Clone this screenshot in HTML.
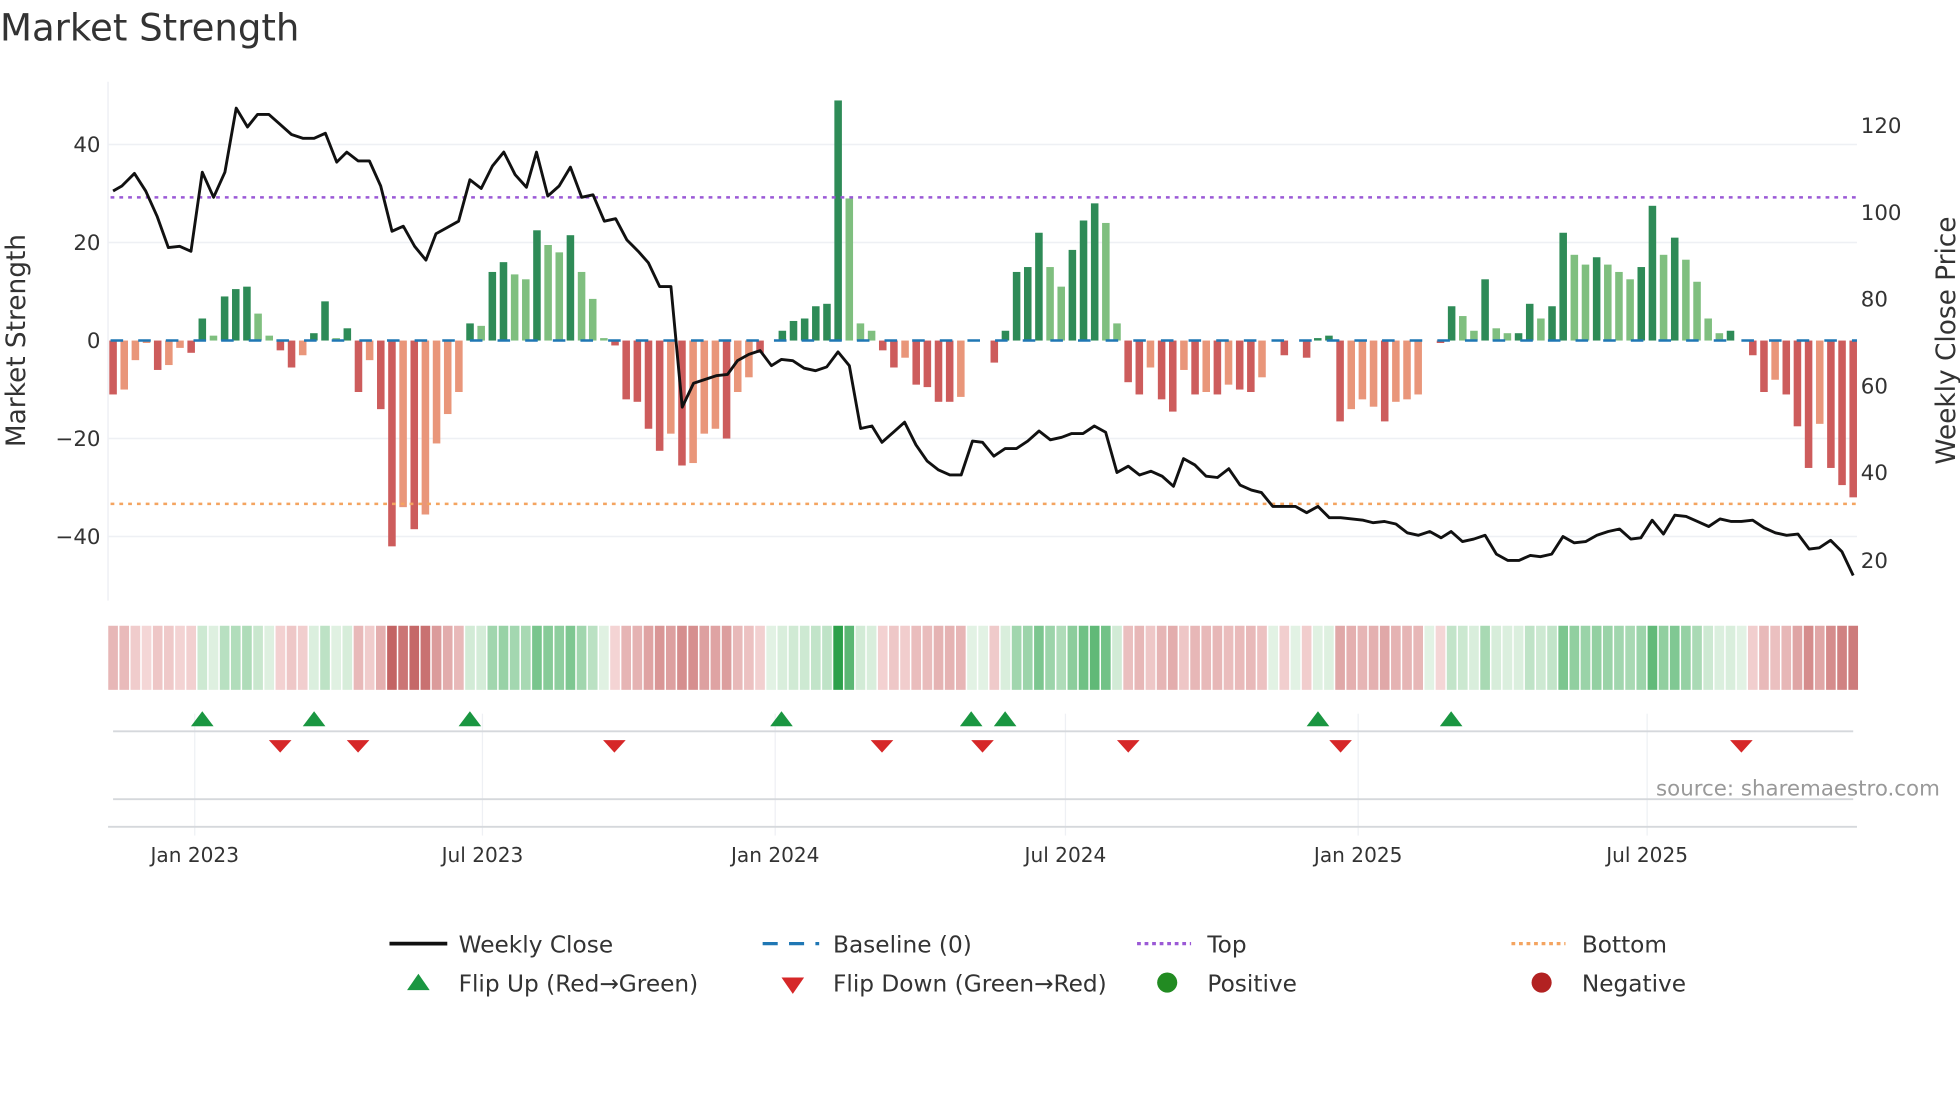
<!DOCTYPE html>
<html><head><meta charset="utf-8"><style>
html,body{margin:0;padding:0;background:#fff;width:1960px;height:1102px;overflow:hidden}
svg{display:block}
text{font-family:"DejaVu Sans","Liberation Sans",sans-serif;fill:#333}
</style></head><body>
<svg id="s" width="1960" height="1102" viewBox="0 0 1560 877" xmlns="http://www.w3.org/2000/svg">
<rect width="1560" height="877" fill="#fff"/>
<text x="0" y="32" font-size="29.5" fill="#333">Market Strength</text>
<g stroke="#eef0f4" stroke-width="1.2">
<line x1="86" x2="1478" y1="115" y2="115"/><line x1="86" x2="1478" y1="193" y2="193"/>
<line x1="86" x2="1478" y1="349" y2="349"/><line x1="86" x2="1478" y1="427" y2="427"/>
</g>
<line x1="86" x2="86" y1="65" y2="478" stroke="#eef0f4" stroke-width="1.2"/>
<g font-size="17" text-anchor="end">
<text x="80" y="121">40</text><text x="80" y="199">20</text><text x="80" y="277">0</text>
<text x="80" y="355">−20</text><text x="80" y="433">−40</text>
</g>
<g font-size="17">
<text x="1481" y="106">120</text><text x="1481" y="175">100</text><text x="1481" y="244">80</text>
<text x="1481" y="313">60</text><text x="1481" y="382">40</text><text x="1481" y="452">20</text>
</g>
<text transform="translate(20,271) rotate(-90)" font-size="21" text-anchor="middle">Market Strength</text>
<text transform="translate(1556,271) rotate(-90)" font-size="21" text-anchor="middle">Weekly Close Price</text>
<g id="bars"></g>
<line x1="88" x2="1478" y1="271" y2="271" stroke="#1f77b4" stroke-width="2" stroke-dasharray="10,12"/>
<line x1="88" x2="1478" y1="157" y2="157" stroke="#9b59d6" stroke-width="2" stroke-dasharray="3,4"/>
<line x1="88" x2="1478" y1="401" y2="401" stroke="#f4a460" stroke-width="2" stroke-dasharray="3,4"/>
<polyline id="price" fill="none" stroke="#111" stroke-width="2.3" stroke-linejoin="round"/>
<g id="heat"></g>
<g stroke="#eef0f4" stroke-width="1">
<line x1="155" x2="155" y1="568" y2="665"/><line x1="384" x2="384" y1="568" y2="665"/>
<line x1="617" x2="617" y1="568" y2="665"/><line x1="848" x2="848" y1="568" y2="665"/>
<line x1="1081" x2="1081" y1="568" y2="665"/><line x1="1311" x2="1311" y1="568" y2="665"/>
</g>
<line x1="90" x2="1475" y1="582" y2="582" stroke="#d5d8dc" stroke-width="1.5"/>
<line x1="90" x2="1475" y1="636" y2="636" stroke="#d5d8dc" stroke-width="1.5"/>
<line x1="86" x2="1478" y1="658" y2="658" stroke="#d5d8dc" stroke-width="1.5"/>
<g id="flips"></g>
<text x="1544" y="633" font-size="17" text-anchor="end" style="fill:#999">source: sharemaestro.com</text>
<g font-size="16" text-anchor="middle">
<text x="155" y="686">Jan 2023</text><text x="384" y="686">Jul 2023</text><text x="617" y="686">Jan 2024</text>
<text x="848" y="686">Jul 2024</text><text x="1081" y="686">Jan 2025</text><text x="1311" y="686">Jul 2025</text>
</g>
<g font-size="18.5">
<line x1="310" x2="356" y1="751" y2="751" stroke="#111" stroke-width="3"/>
<text x="365" y="758">Weekly Close</text>
<line x1="607" x2="652" y1="751" y2="751" stroke="#1f77b4" stroke-width="2.5" stroke-dasharray="12,9"/>
<text x="663" y="758">Baseline (0)</text>
<line x1="905" x2="948" y1="751" y2="751" stroke="#9b59d6" stroke-width="2.5" stroke-dasharray="3,3"/>
<text x="961" y="758">Top</text>
<line x1="1203" x2="1246" y1="751" y2="751" stroke="#f4a460" stroke-width="2.5" stroke-dasharray="3,3"/>
<text x="1259" y="758">Bottom</text>
<polygon points="324,788 333,775 342,788" fill="#1a9641"/>
<text x="365" y="789">Flip Up (Red→Green)</text>
<polygon points="622,778 640,778 631,791" fill="#d62728"/>
<text x="663" y="789">Flip Down (Green→Red)</text>
<circle cx="929" cy="782" r="8" fill="#228b22"/>
<text x="961" y="789">Positive</text>
<circle cx="1227" cy="782" r="8" fill="#b22222"/>
<text x="1259" y="789">Negative</text>
</g>
</svg>
<script>
var NS="http://www.w3.org/2000/svg";
function el(p,t,a){var e=document.createElementNS(NS,t);for(var k in a)e.setAttribute(k,a[k]);p.appendChild(e);return e;}
var B=[[-11,1],[-10,0],[-4,0],[-0.5,0],[-6,1],[-5,0],[-1.5,0],[-2.5,1],[4.5,1],[1,0],[9,1],[10.5,1],[11,1],[5.5,0],[1,0],[-2,1],[-5.5,1],[-3,0],[1.5,1],[8,1],[0.5,0],[2.5,1],[-10.5,1],[-4,0],[-14,1],[-42,1],[-34,0],[-38.5,1],[-35.5,0],[-21,0],[-15,0],[-10.5,0],[3.5,1],[3,0],[14,1],[16,1],[13.5,0],[12.5,0],[22.5,1],[19.5,0],[18,0],[21.5,1],[14,0],[8.5,0],[0.5,0],[-1,1],[-12,1],[-12.5,1],[-18,1],[-22.5,1],[-19,0],[-25.5,1],[-25,0],[-19,0],[-18,0],[-20,1],[-10.5,0],[-7.5,0],[-2.5,1],[0,0],[2,1],[4,1],[4.5,1],[7,1],[7.5,1],[49,1],[29,0],[3.5,0],[2,0],[-2,1],[-5.5,1],[-3.5,0],[-9,1],[-9.5,1],[-12.5,1],[-12.5,1],[-11.5,0],[0,0],[0,0],[-4.5,1],[2,1],[14,1],[15,1],[22,1],[15,0],[11,0],[18.5,1],[24.5,1],[28,1],[24,0],[3.5,0],[-8.5,1],[-11,1],[-5.5,0],[-12,1],[-14.5,1],[-6,0],[-11,1],[-10.5,0],[-11,1],[-9,0],[-10,1],[-10.5,1],[-7.5,0],[0,0],[-3,1],[0,0],[-3.5,1],[0.5,1],[1,1],[-16.5,1],[-14,0],[-12,0],[-13.5,0],[-16.5,1],[-12.5,0],[-12,0],[-11,0],[0,0],[-0.5,1],[7,1],[5,0],[2,0],[12.5,1],[2.5,0],[1.5,0],[1.5,1],[7.5,1],[4.5,0],[7,1],[22,1],[17.5,0],[15.5,0],[17,1],[15.5,0],[14,0],[12.5,0],[15,1],[27.5,1],[17.5,0],[21,1],[16.5,0],[12,0],[4.5,0],[1.5,0],[2,1],[0,0],[-3,1],[-10.5,1],[-8,0],[-11,1],[-17.5,1],[-26,1],[-17,0],[-26,1],[-29.5,1],[-32,1]];
var n=B.length, x0=90, x1=1475, dx=(x1-x0)/(n-1);
var g=document.getElementById("bars"), h=document.getElementById("heat");
function mix(a,b,t){return "rgb("+[0,1,2].map(function(i){return Math.round(a[i]+(b[i]-a[i])*t)}).join(",")+")";}
B.forEach(function(b,i){
 var v=b[0],x=x0+i*dx,y0=271,hh=Math.abs(v)*3.9;
 var c=v>=0?(b[1]?"#2e8b57":"#7fbf7f"):(b[1]?"#cd5c5c":"#e9967a");
 if(hh>0.3) el(g,"rect",{x:x-3,y:v>=0?y0-hh:y0,width:6,height:hh,fill:c});
 var hc=v>=0?mix([235,246,235],[60,170,90],Math.min(1,Math.abs(v)/30)*0.8+0.05):mix([245,215,215],[195,100,100],Math.min(1,Math.abs(v)/40));
 if(v>=45) hc="#2ca04a";
 el(h,"rect",{x:x-dx/2+0.6,y:498,width:dx-1.2,height:51,fill:hc});
});
var P=[90,152,97,148,107,138,116,152,125,172,134,197,143,196,152,200,161,137,170,157,179,137,188,86,197,101,205,91,214,91,223,99,232,107,241,110,250,110,259,106,268,129,276,121,285,128,294,128,303,148,312,184,321,180,330,196,339,207,347,186,356,181,365,176,374,143,383,150,392,132,401,121,410,139,419,149,427,121,436,156,445,148,454,133,463,157,472,155,481,176,490,174,499,191,508,200,516,209,525,228,534,228,543,324,552,305,561,302,570,299,579,298,587,287,596,282,605,279,614,291,622,286,631,287,640,293,649,295,658,292,667,280,676,291,685,341,694,339,702,352,711,344,720,336,729,354,738,367,747,374,756,378,765,378,774,351,782,352,791,363,800,357,809,357,818,351,827,343,836,350,845,348,853,345,862,345,871,339,880,344,889,376,898,371,907,378,916,375,925,379,934,387,942,365,951,370,960,379,969,380,978,373,987,386,996,390,1004,392,1013,403,1022,403,1031,403,1040,408,1049,403,1058,412,1067,412,1076,413,1085,414,1093,416,1102,415,1111,417,1120,424,1129,426,1138,423,1147,428,1155,423,1164,431,1173,429,1182,426,1191,441,1200,446,1209,446,1218,442,1226,443,1235,441,1244,427,1253,432,1262,431,1271,426,1280,423,1289,421,1298,429,1306,428,1315,414,1324,425,1333,410,1342,411,1351,415,1360,419,1369,413,1378,415,1386,415,1395,414,1404,420,1413,424,1422,426,1431,425,1440,437,1448,436,1457,430,1466,439,1475,458];
var pts=[];for(var i=0;i<P.length;i+=2)pts.push(P[i]+","+P[i+1]);
document.getElementById("price").setAttribute("points",pts.join(" "));
var f=document.getElementById("flips");
[161,250,374,622,773,800,1049,1155].forEach(function(x){el(f,"polygon",{points:(x-9)+",578 "+x+",566 "+(x+9)+",578",fill:"#1a9641"});});
[223,285,489,702,782,898,1067,1386].forEach(function(x){el(f,"polygon",{points:(x-9)+",589 "+(x+9)+",589 "+x+",599",fill:"#d62728"});});
</script>
</body></html>
